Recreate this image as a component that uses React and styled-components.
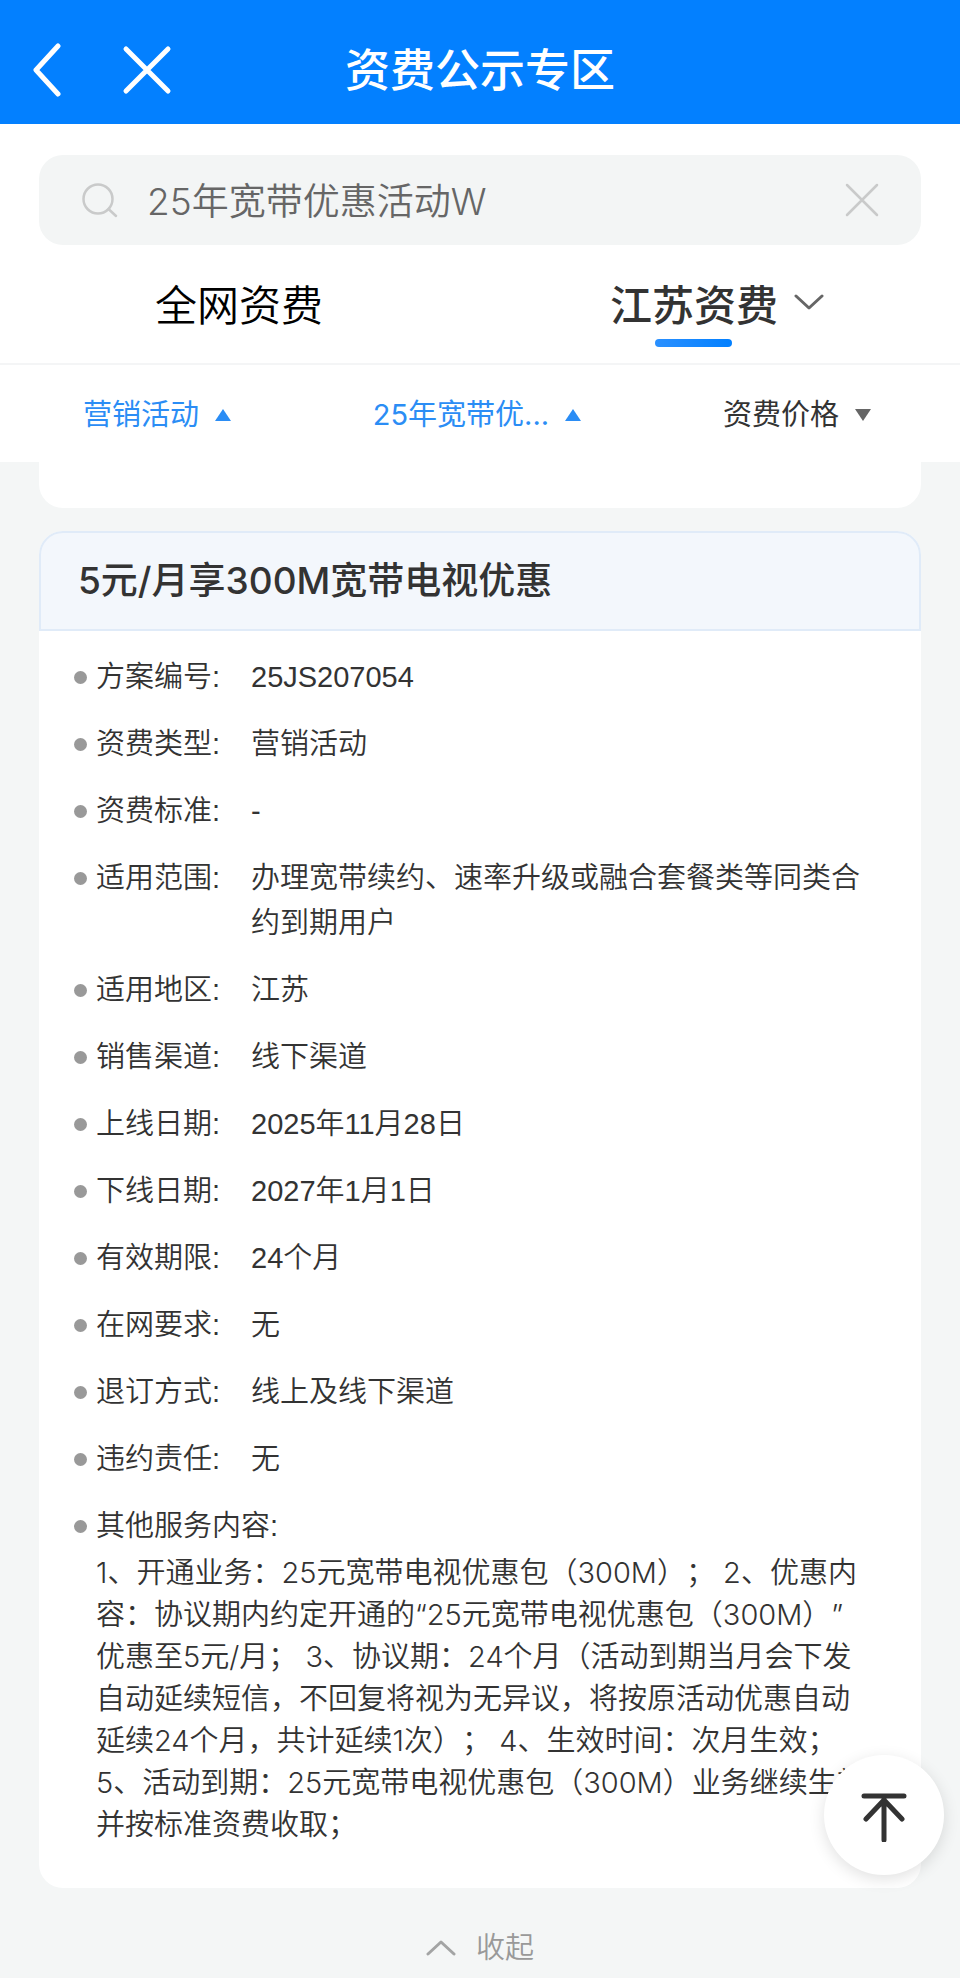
import React, { useState } from "react";
import styled, { createGlobalStyle } from "styled-components";

const details = [
  { label: "方案编号", value: "25JS207054" },
  { label: "资费类型", value: "营销活动" },
  { label: "资费标准", value: "-" },
  { label: "适用范围", value: "办理宽带续约、速率升级或融合套餐类等同类合约到期用户" },
  { label: "适用地区", value: "江苏" },
  { label: "销售渠道", value: "线下渠道" },
  { label: "上线日期", value: "2025年11月28日" },
  { label: "下线日期", value: "2027年1月1日" },
  { label: "有效期限", value: "24个月" },
  { label: "在网要求", value: "无" },
  { label: "退订方式", value: "线上及线下渠道" },
  { label: "违约责任", value: "无" },
];

const serviceText = `1、开通业务：25元宽带电视优惠包（300M）； 2、优惠内
容：协议期内约定开通的“25元宽带电视优惠包（300M）”
优惠至5元/月； 3、协议期：24个月（活动到期当月会下发
自动延续短信，不回复将视为无异议，将按原活动优惠自动
延续24个月，共计延续1次）； 4、生效时间：次月生效；
5、活动到期：25元宽带电视优惠包（300M）业务继续生效
并按标准资费收取；`;

const filters = [
  { id: "type", text: "营销活动", active: true },
  { id: "plan", text: "25年宽带优...", active: true },
  { id: "price", text: "资费价格", active: false },
];

const App = () => {
  const [keyword, setKeyword] = useState("25年宽带优惠活动W");
  const [tab, setTab] = useState("js");

  const goTop = () => {
    window.scrollTo({ top: 0, behavior: "smooth" });
  };

  return (
    <React.Fragment>
      <GlobalStyle />
      <Page>
        <Header>
          <HeaderButtons>
            <IconButton aria-label="返回">
              <svg width="30" height="54" viewBox="0 0 30 54" fill="none" stroke="#fff" strokeWidth="5" strokeLinecap="round" strokeLinejoin="round">
                <path d="M26 3 4 27l22 24" />
              </svg>
            </IconButton>
            <IconButton aria-label="关闭">
              <svg width="50" height="50" viewBox="0 0 50 50" fill="none" stroke="#fff" strokeWidth="5" strokeLinecap="round">
                <path d="M4 4l42 42M46 4 4 46" />
              </svg>
            </IconButton>
          </HeaderButtons>
          <Title>资费公示专区</Title>
        </Header>

        <TopPanel>
          <SearchBox>
            <svg width="36" height="36" viewBox="0 0 36 36" fill="none" stroke="#c9caca" strokeWidth="2.5" strokeLinecap="round">
              <circle cx="16" cy="17" r="14.5" />
              <path d="M26.5 27 34 34" />
            </svg>
            <SearchInput
              type="text"
              aria-label="搜索"
              value={keyword}
              onChange={(e) => setKeyword(e.target.value)}
            />
            <IconButton aria-label="清空" onClick={() => setKeyword("")}>
              <svg width="34" height="34" viewBox="0 0 34 34" fill="none" stroke="#c9caca" strokeWidth="2.5" strokeLinecap="round">
                <path d="M2 2l30 30M32 2 2 32" />
              </svg>
            </IconButton>
          </SearchBox>

          <Tabs>
            <Tab $active={tab === "all"} onClick={() => setTab("all")}>
              <TabLabel>
                全网资费
                <TabLine $active={tab === "all"} />
              </TabLabel>
            </Tab>
            <Tab $active={tab === "js"} onClick={() => setTab("js")}>
              <TabLabel>
                江苏资费
                <TabLine $active={tab === "js"} />
              </TabLabel>
              <TabArrow viewBox="0 0 30 44">
                <path d="M2 13l13 12 13-12" />
              </TabArrow>
            </Tab>
          </Tabs>

          <Filters>
            {filters.map((item) => (
              <Filter key={item.id} $active={item.active}>
                {item.text}
                <svg width="18" height="14" viewBox="0 0 18 14">
                  {item.active
                    ? <path d="M9 1 17 13H1z" fill="#2b8df5" />
                    : <path d="M9 13 1 1h16z" fill="#666" />}
                </svg>
              </Filter>
            ))}
          </Filters>
        </TopPanel>

        <List>
          <PrevCard />
          <Card>
            <CardTitle>5元/月享300M宽带电视优惠</CardTitle>
            <CardBody>
              <Details>
                {details.map((item) => (
                  <Row key={item.label}>
                    <Label>{item.label}:</Label>
                    <Value>{item.value}</Value>
                  </Row>
                ))}
                <Row $block>
                  <Label>其他服务内容:</Label>
                  <ServiceText>{serviceText}</ServiceText>
                </Row>
              </Details>
            </CardBody>
          </Card>
          <Collapse>
            <svg width="30" height="18" viewBox="0 0 30 18" fill="none" stroke="#a3a4a4" strokeWidth="3" strokeLinecap="round" strokeLinejoin="round">
              <path d="M2 15 15 3l13 12" />
            </svg>
            收起
          </Collapse>
        </List>

        <TopButton aria-label="回到顶部" onClick={goTop}>
          <svg width="48" height="54" viewBox="0 0 48 54" fill="none" stroke="#333" strokeWidth="5" strokeLinecap="round" strokeLinejoin="round">
            <path d="M4 8h40M24 11v41M6 31 24 12l18 19" />
          </svg>
        </TopButton>
      </Page>
    </React.Fragment>
  );
};

const GlobalStyle = createGlobalStyle`
* {
  box-sizing: border-box;
}

body {
  margin: 0;
  background-color: #f4f6f6;
  color: #333;
  font-family: "Liberation Sans", "Noto Sans CJK SC", sans-serif;
  font-weight: 350;
  text-spacing-trim: space-all;
}

button, input {
  font-family: inherit;
  font-weight: inherit;
  padding: 0;
  border: 0 none;
  background: none;
}

button {
  cursor: pointer;
}

svg {
  display: block;
  flex: none;
}
`;

const Page = styled.div`
  min-height: 100vh;
`;

const Header = styled.header`
  display: grid;
  grid-template-columns: 1fr auto 1fr;
  align-items: center;
  height: 124px;
  padding: 16px 32px 0;
  background-color: #0380ff;
`;

const HeaderButtons = styled.div`
  display: flex;
  align-items: center;
  gap: 60px;
`;

const IconButton = styled.button`
  flex: none;
`;

const Title = styled.h1`
  margin: 0;
  padding-top: 4px;
  color: #fff;
  font-size: 45px;
  font-weight: 500;
  line-height: 64px;
`;

const TopPanel = styled.div`
  padding-top: 31px;
  background-color: #fff;
`;

const SearchBox = styled.div`
  display: flex;
  align-items: center;
  height: 90px;
  margin: 0 39px;
  padding: 0 42px 0 43px;
  border-radius: 24px;
  background-color: #f3f5f5;
`;

const SearchInput = styled.input`
  flex: 1;
  min-width: 0;
  margin: 0 30px 0 29px;
  padding-top: 3px;
  color: #666;
  font-family: "Inter", "Noto Sans CJK SC", sans-serif;
  font-size: 37px;
  line-height: 56px;
  outline: none;
`;

const Tabs = styled.div`
  display: flex;
  padding: 38px 4px 16px 0;
  border-bottom: 2px solid #f4f5f6;
`;

const Tab = styled.button`
  display: flex;
  flex: 1;
  align-items: flex-start;
  justify-content: center;
  gap: 16px;
  color: ${(props) => (props.$active ? "#333" : "#000")};
  font-size: 42px;
  font-weight: ${(props) => (props.$active ? 500 : 350)};
  line-height: 48px;
`;

const TabLabel = styled.span`
  display: flex;
  flex-direction: column;
  align-items: center;
  gap: 8px;
`;

const TabLine = styled.span`
  width: 77px;
  height: 8px;
  border-radius: 4px;
  background: ${(props) => (props.$active ? "linear-gradient(90deg, #2a90ff, #0380ff)" : "none")};
`;

const TabArrow = styled.svg`
  width: 30px;
  height: 44px;
  fill: none;
  stroke: #666;
  stroke-width: 3;
  stroke-linecap: round;
  stroke-linejoin: round;
`;

const Filters = styled.div`
  display: flex;
  padding: 29px 0 27px;
`;

const Filter = styled.button`
  display: flex;
  flex: 1;
  align-items: center;
  justify-content: center;
  gap: 15px;
  padding-right: 5px;
  color: ${(props) => (props.$active ? "#2b8df5" : "#333")};
  font-family: "Inter", "Noto Sans CJK SC", sans-serif;
  font-size: 29px;
  font-weight: 400;
  line-height: 41px;
`;

const List = styled.main`
  padding: 0 39px;
`;

const PrevCard = styled.div`
  height: 46px;
  margin-bottom: 23px;
  border-radius: 0 0 24px 24px;
  background-color: #fff;
`;

const Card = styled.section`
  border-radius: 24px;
  background-color: #fff;
`;

const CardTitle = styled.h2`
  margin: 0;
  padding: 22px 37px;
  border: 2px solid #e0ebf8;
  border-radius: 24px 24px 0 0;
  background-color: #f3f7fc;
  font-family: "Inter", "Noto Sans CJK SC", sans-serif;
  font-size: 37px;
  font-weight: 500;
  line-height: 52px;
`;

const CardBody = styled.div`
  padding: 24px 38px 42px 35px;
`;

const Details = styled.dl`
  display: flex;
  flex-direction: column;
  gap: 22px;
  margin: 0;
  font-size: 29px;
  line-height: 45px;
`;

const Row = styled.div`
  display: ${(props) => (props.$block ? "block" : "flex")};
`;

const Label = styled.dt`
  display: flex;
  align-items: center;
  flex: none;
  width: 177px;
  height: 45px;
  white-space: nowrap;

  &::before {
    content: "";
    flex: none;
    width: 13px;
    height: 13px;
    margin-right: 9px;
    border-radius: 50%;
    background-color: #999;
  }
`;

const Value = styled.dd`
  flex: 1;
  margin: 0;
`;

const ServiceText = styled.dd`
  margin: 0 0 0 22px;
  padding-top: 3px;
  font-family: "Inter", "Noto Sans CJK SC", sans-serif;
  line-height: 42px;
  white-space: pre-line;
`;

const Collapse = styled.button`
  display: flex;
  align-items: center;
  justify-content: center;
  gap: 20px;
  width: 100%;
  padding: 38px 0 6px;
  color: #999;
  font-size: 29px;
  line-height: 44px;
`;

const TopButton = styled.button`
  position: fixed;
  right: 16px;
  bottom: 103px;
  display: flex;
  align-items: center;
  justify-content: center;
  width: 120px;
  height: 120px;
  border-radius: 50%;
  background-color: #fff;
  box-shadow: 0 4px 16px rgba(0, 0, 0, 0.12);
`;

export default App;
